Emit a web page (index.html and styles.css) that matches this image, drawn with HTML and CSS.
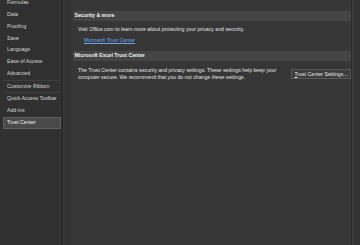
FILE: index.html
```html
<!DOCTYPE html>
<html lang="en">
<head>
  <meta charset="UTF-8" />
  <meta name="viewport" content="width=device-width, initial-scale=1" />
  <title>Excel Options | Trust Center</title>
  <link rel="stylesheet" href="styles.css">
</head>
<body>

<div class="app">
  <nav class="side">
    <ul class="cats">
      <li>Formulas</li>
      <li>Data</li>
      <li>Proofing</li>
      <li>Save</li>
      <li>Language</li>
      <li>Ease of Access</li>
      <li>Advanced</li>
      <li class="sep"></li>
      <li>Customize Ribbon</li>
      <li class="sep"></li>
      <li>Quick Access Toolbar</li>
      <li>Add-ins</li>
      <li class="active">Trust Center</li>
    </ul>
  </nav>

  <main class="pane">
    <section class="group">
      <h2 class="group-head">Security &amp; more</h2>
      <p class="group-text">Visit Office.com to learn more about protecting your privacy and security.</p>
      <a href="#" class="link">Microsoft Trust Center</a>
    </section>

    <section class="group">
      <h2 class="group-head">Microsoft Excel Trust Center</h2>
      <div class="group-row">
        <p class="group-text wrap">The Trust Center contains security and privacy settings. These settings help keep your computer secure. We recommend that you do not change these settings.</p>
        <button class="btn"><u>T</u>rust Center Settings...</button>
      </div>
    </section>
  </main>

  <div class="scroll"></div>
</div>

</body>
</html>
```

FILE: styles.css
```css
html, body {
  margin: 0;
  height: 100%;
  background: #363636;
  color: #e2e2e2;
  font-family: 'Liberation Sans', Arial, sans-serif;
  font-size: 5.2px;
  overflow: hidden;
}
.app {
  display: flex;
  height: 245px;
}

/* left category list */
.side {
  width: 62px;
  flex: none;
  background: #303030;
  border-right: 1px solid #242424;
  overflow: hidden;
}
.cats {
  list-style: none;
  margin: -2.9px 0 0;
  padding: 0 1px 0 3px;
}
.cats li {
  height: 11.8px;
  line-height: 11.8px;
  padding-left: 4px;
  color: #d4d4d4;
  white-space: nowrap;
}
.cats li.sep {
  height: 0;
  margin: 0;
  border-top: 1px solid #3e3e3e;
}
.cats li.active {
  background: #4a4a4a;
  border: 1px solid #5e5e5e;
  height: 9.8px;
  line-height: 9.8px;
  padding-left: 3px;
  color: #f0f0f0;
}

/* right options pane */
.pane {
  flex: 1;
  padding: 11px 0 0 9px;
  border-left: 1px solid #3a3a3a;
  box-shadow: inset 6px 0 0 #343434;
}
.group-head {
  margin: 0;
  height: 9.5px;
  line-height: 9.5px;
  padding-left: 1.5px;
  background: #454545;
  color: #f2f2f2;
  font-size: 5.2px;
  font-weight: bold;
}
.group-text {
  margin: 5.5px 0 0 5px;
  line-height: 6.5px;
}
.link {
  display: inline-block;
  margin: 4.5px 0 0 11px;
  color: #6aa6ea;
  line-height: 6.5px;
}
.group + .group {
  margin-top: 7.5px;
}
.group-row {
  display: flex;
  justify-content: space-between;
  align-items: flex-start;
}
.group-row .wrap {
  width: 210px;
  margin-top: 6.5px;
}
.btn {
  margin-top: 8px;
  width: 60px;
  height: 10px;
  padding: 0;
  background: #3d3d3d;
  border: 1px solid #585858;
  color: #e6e6e6;
  font-family: inherit;
  font-size: 5.2px;
}
.btn u {
  text-decoration: underline;
}

.scroll {
  width: 8px;
  flex: none;
  background: #333;
  border-left: 1px solid #2b2b2b;
  box-shadow: inset 2px 0 0 #3b3b3b;
}
```
